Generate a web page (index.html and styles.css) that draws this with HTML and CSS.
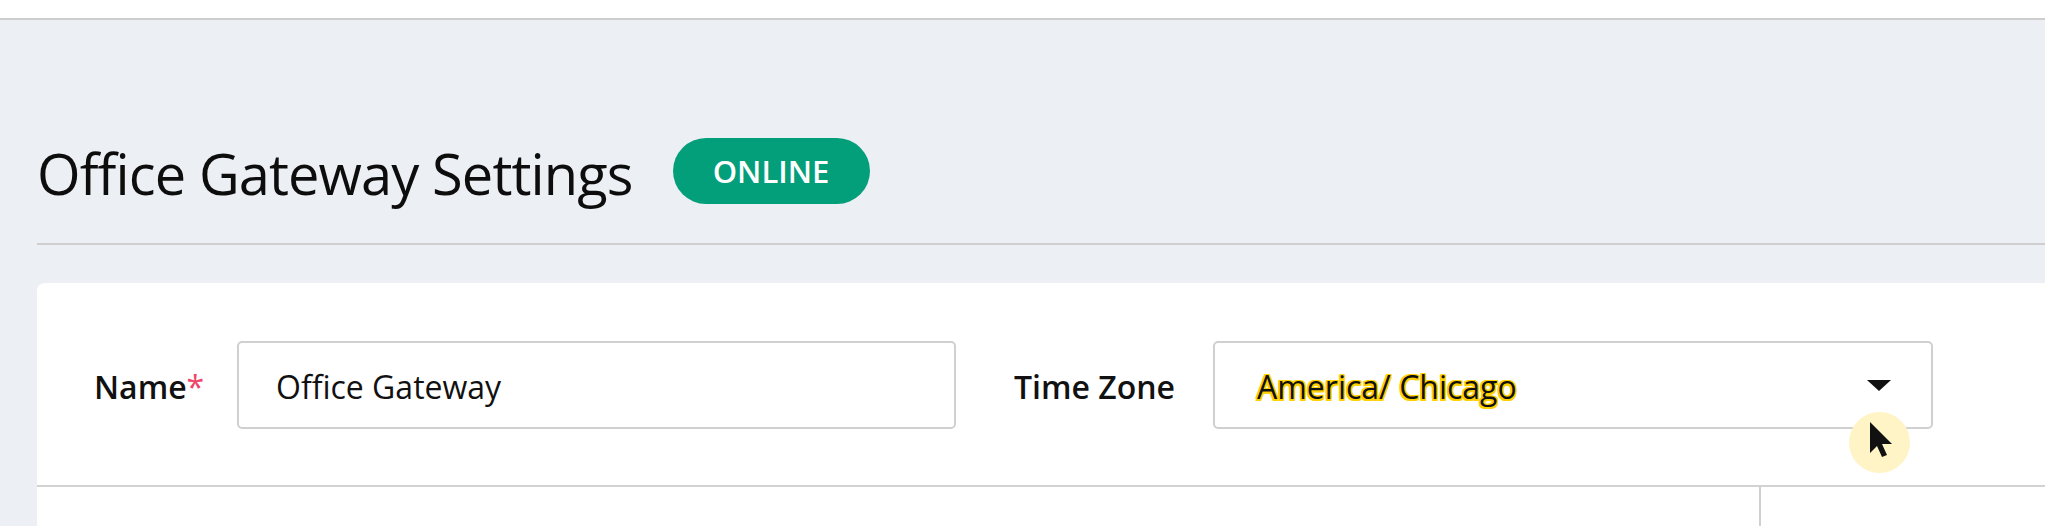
FILE: index.html
```html
<!DOCTYPE html>
<html lang="en">
<head>
<meta charset="utf-8">
<title>Office Gateway Settings</title>
<link rel="stylesheet" href="styles.css">
</head>
<body>
  <header class="topbar"></header>
  <main class="page">
    <div class="title-row">
      <h1 class="title">Office Gateway Settings</h1>
      <span class="badge">ONLINE</span>
    </div>
    <section class="card">
      <div class="form-row">
        <div class="field">
          <label class="field-label field-label--name">Name<span class="req">*</span></label>
          <div class="input">Office Gateway</div>
        </div>
        <div class="field">
          <label class="field-label field-label--tz">Time Zone</label>
          <div class="select">
            <span class="select-value">America/ Chicago</span>
            <span class="caret"></span>
            <span class="cursor-halo"></span>
            <svg class="cursor" width="23" height="36" viewBox="0 0 23 36"><polygon points="0,0 0,31 7,24 12,35 17,33 12,22 22,22" fill="#111"/></svg>
          </div>
        </div>
      </div>
      <div class="lower">
        <div class="lower-col lower-col--main"></div>
        <div class="lower-col"></div>
      </div>
    </section>
  </main>
</body>
</html>
```
FILE: styles.css
```css
* { box-sizing: border-box; }
html, body { margin: 0; padding: 0; }
body {
  width: 2045px;
  height: 526px;
  overflow: hidden;
  background: #eceff4;
  font-family: "Open Sans", "Noto Sans", sans-serif;
  color: #111;
}
.topbar {
  height: 20px;
  background: #fff;
  border-bottom: 2px solid #cdcdcd;
}
.page {
  padding: 118px 0 0 37px;
}
.title-row {
  display: flex;
  align-items: center;
  gap: 40px;
  height: 66px;
}
.title {
  margin: 0;
  font-size: 56px;
  font-weight: 400;
  letter-spacing: -0.9px;
  line-height: 66px;
  padding-top: 3px;
  color: #0d0d0d;
}
.badge {
  display: inline-block;
  height: 66px;
  width: 197px;
  border-radius: 33px;
  background: #039e7a;
  color: #fff;
  font-size: 31px;
  font-weight: 600;
  line-height: 66px;
  text-align: center;
  letter-spacing: 0;
}
.card {
  position: relative;
  margin-top: 79px;
  background: #fff;
  border-radius: 8px 0 0 0;
}
.card::before {
  content: "";
  position: absolute;
  left: 0;
  right: 0;
  top: -40px;
  border-top: 2px solid #cfcfcf;
}
.form-row {
  display: flex;
  align-items: center;
  gap: 58px;
  padding: 58px 0 56px 57px;
  border-bottom: 2px solid #d2d2d2;
}
.field {
  display: flex;
  align-items: center;
}
.field-label {
  font-size: 32px;
  font-weight: 600;
  color: #111;
  padding-top: 2px;
}
.field-label--name { width: 143px; }
.field-label--tz { width: 199px; }
.req { color: #ee4468; font-weight: 400; }
.input, .select {
  position: relative;
  height: 88px;
  border: 2px solid #d0d0d0;
  border-radius: 5px;
  display: flex;
  align-items: center;
  font-size: 32px;
  color: #111;
  padding-top: 3px;
}
.input {
  width: 719px;
  padding-left: 37px;
}
.select {
  width: 720px;
  padding-left: 42px;
  padding-right: 40px;
  justify-content: space-between;
}
.select-value {
  text-shadow:
    1.5px 0 0 #ffd000, -1.5px 0 0 #ffd000, 0 1.5px 0 #ffd000, 0 -1.5px 0 #ffd000,
    1.5px 1.5px 0 #ffd000, -1.5px -1.5px 0 #ffd000, 1.5px -1.5px 0 #ffd000, -1.5px 1.5px 0 #ffd000;
}
.caret {
  width: 0;
  height: 0;
  border-left: 12px solid transparent;
  border-right: 12px solid transparent;
  border-top: 11px solid #111;
  margin-bottom: 3px;
}
.cursor-halo {
  position: absolute;
  left: 634px;
  top: 69px;
  width: 61px;
  height: 61px;
  border-radius: 50%;
  background: #fff4c6;
}
.cursor {
  position: absolute;
  left: 655px;
  top: 79px;
}
.lower {
  display: grid;
  grid-template-columns: 1724px 1fr;
  height: 60px;
}
.lower-col--main {
  border-right: 2px solid #d0d0d0;
}
```
